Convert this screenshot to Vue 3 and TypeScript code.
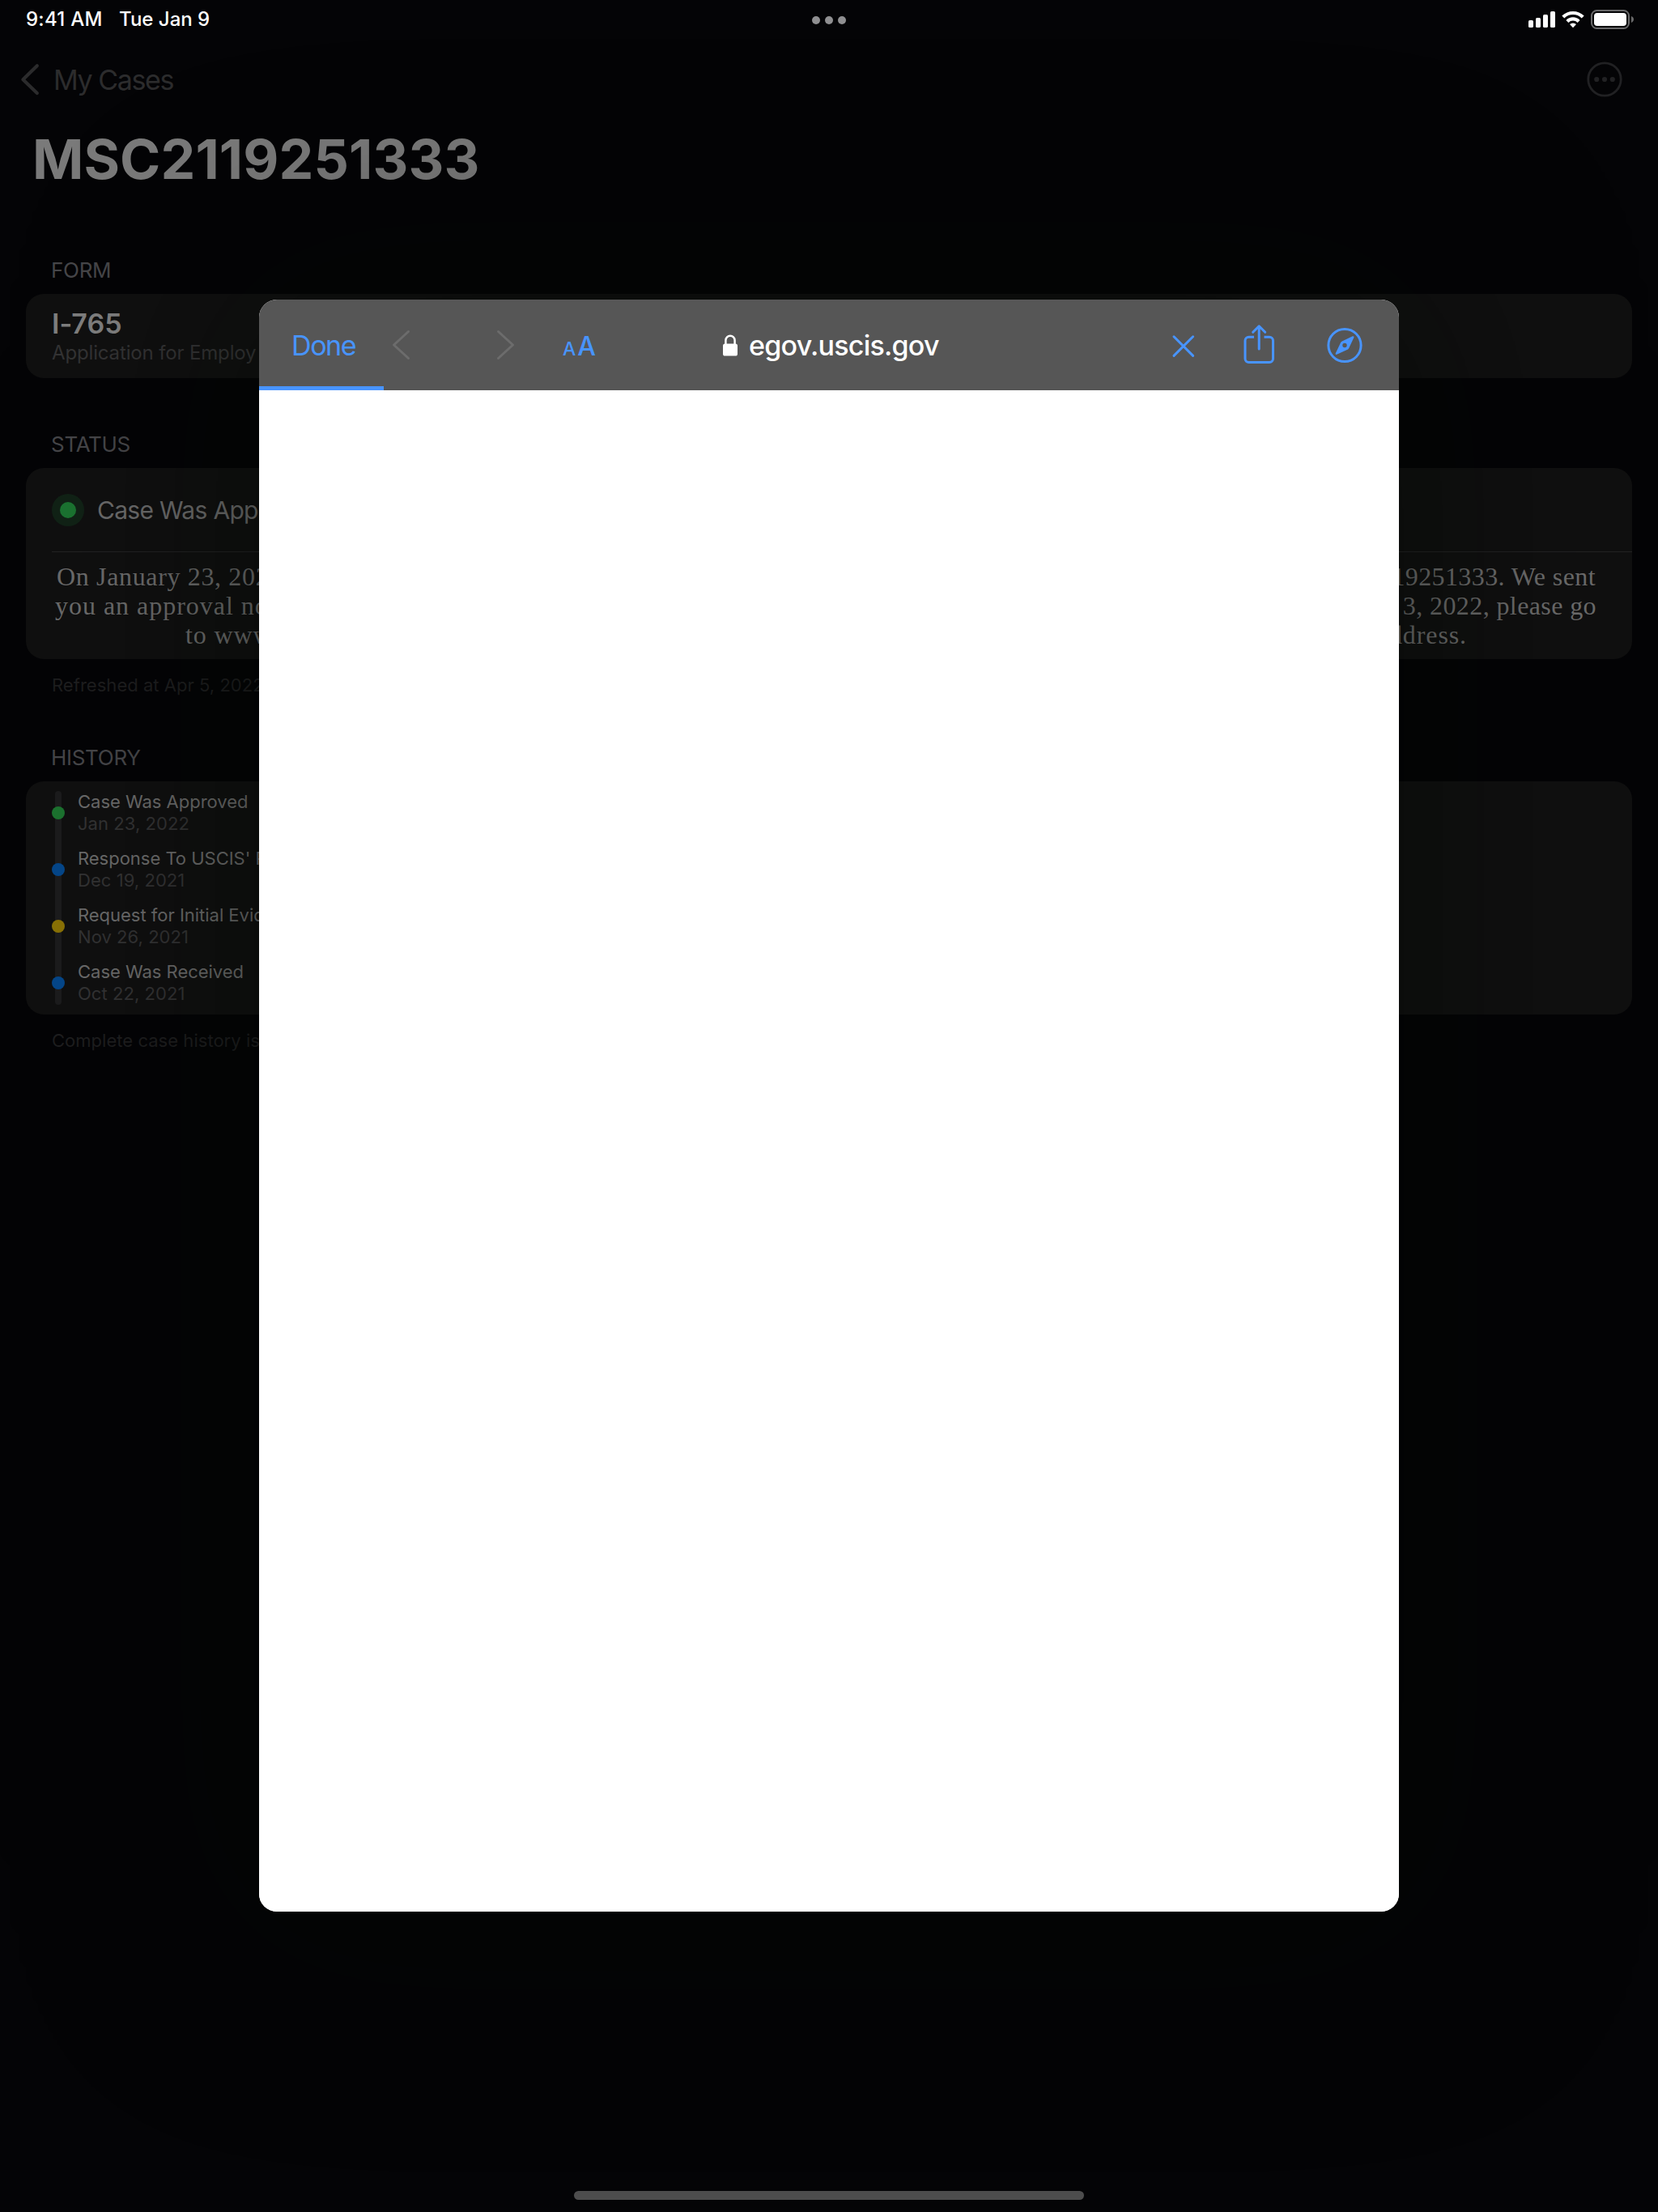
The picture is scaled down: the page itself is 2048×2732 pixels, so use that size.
<script setup lang="ts">
interface HistoryEvent {
  name: string
  date: string
  color: string
}

const caseNumber = 'MSC2119251333'

const events: HistoryEvent[] = [
  { name: 'Case Was Approved', date: 'Jan 23, 2022', color: '#1c732f' },
  { name: "Response To USCIS' R", date: 'Dec 19, 2021', color: '#05478a' },
  { name: 'Request for Initial Evid', date: 'Nov 26, 2021', color: '#8a7206' },
  { name: 'Case Was Received', date: 'Oct 22, 2021', color: '#05478a' },
]
</script>

<template>
  <div class="screen">
    <header class="status-bar">
      <span class="time">9:41 AM</span>
      <span class="day">Tue Jan 9</span>
      <svg class="multitask" width="42" height="10" viewBox="0 0 42 10" fill="#8f8f91">
        <circle cx="5" cy="5" r="5" /><circle cx="21" cy="5" r="5" /><circle cx="37" cy="5" r="5" />
      </svg>
      <svg class="indicators" width="134" height="28" viewBox="0 0 134 28" fill="#fff">
        <rect x="2" y="15" width="6" height="9" rx="1.6" />
        <rect x="11" y="12" width="6" height="12" rx="1.6" />
        <rect x="20" y="8" width="6" height="16" rx="1.6" />
        <rect x="29" y="4" width="6" height="20" rx="1.6" />
        <g fill="none" stroke="#fff" stroke-width="4.2">
          <path d="M44.8 11.1a17.2 17.2 0 0 1 24.4 0" />
          <path d="M49.9 16.4a10 10 0 0 1 14.2 0" />
        </g>
        <path d="M57 24.2l-4-4.1a5.7 5.7 0 0 1 8 0z" />
        <rect x="80" y="3" width="46" height="22" rx="6.5" fill="none" stroke="#69696a" stroke-width="2" />
        <rect x="83" y="6" width="40" height="16" rx="3.8" />
        <path d="M129 10c2 .8 3 2.2 3 4s-1 3.2-3 4z" fill="#69696a" />
      </svg>
    </header>

    <nav class="nav">
      <svg class="back" width="26" height="42" viewBox="0 0 26 42" fill="none" stroke="#2b2b2c" stroke-width="4.2" stroke-linecap="round" stroke-linejoin="round">
        <path d="M21.8 4.2L4.4 21.2L21.8 38" />
      </svg>
      <span class="back-label">My Cases</span>
      <svg class="more" width="44" height="44" viewBox="0 0 44 44" fill="#212123">
        <circle cx="22" cy="22" r="20.2" fill="none" stroke="#212123" stroke-width="2.8" />
        <circle cx="12.2" cy="22" r="3.1" /><circle cx="22" cy="22" r="3.1" /><circle cx="31.8" cy="22" r="3.1" />
      </svg>
    </nav>

    <h1 class="title">{{ caseNumber }}</h1>

    <section class="section form">
      <h2>FORM</h2>
      <div class="card form-card">
        <div class="form-name">I-765</div>
        <div class="form-desc">Application for Employ</div>
      </div>
    </section>

    <section class="section status">
      <h2>STATUS</h2>
      <div class="card">
        <div class="status-row">
          <span class="halo"><i /></span>
          <span class="status-name">Case Was Approved</span>
        </div>
        <div class="message">
          <div class="line first"><span>On January 23, 202</span><span>19251333. We sent</span></div>
          <div class="line second"><span>you an approval no</span><span>3, 2022, please go</span></div>
          <div class="line third"><span>to www</span><span>ddress.</span></div>
        </div>
      </div>
      <p class="note">Refreshed at Apr 5, 2022</p>
    </section>

    <section class="section history">
      <h2>HISTORY</h2>
      <div class="card history-card">
        <div class="track">
          <i v-for="event in events" :key="event.date" :style="{ background: event.color }" />
        </div>
        <ul>
          <li v-for="event in events" :key="event.date">
            <span>{{ event.name }}</span>
            <span class="date">{{ event.date }}</span>
          </li>
        </ul>
      </div>
      <p class="note">Complete case history is</p>
    </section>

    <div class="home-indicator" />

    <div class="shade" />
    <div class="browser">
      <div class="toolbar">
        <span class="done">Done</span>
        <svg class="prev" width="24" height="40" viewBox="0 0 24 40" fill="none" stroke="#6c6c6c" stroke-width="3" stroke-linecap="round" stroke-linejoin="round">
          <path d="M20.5 3.5L2.5 20L20.5 36.5" />
        </svg>
        <svg class="next" width="24" height="40" viewBox="0 0 24 40" fill="none" stroke="#6c6c6c" stroke-width="3" stroke-linecap="round" stroke-linejoin="round">
          <path d="M3.5 3.5L21.5 20L3.5 36.5" />
        </svg>
        <span class="text-size"><small>A</small>A</span>
        <svg class="lock" width="18" height="28" viewBox="0 0 18 28">
          <rect x="0" y="11.5" width="18" height="15" rx="2.6" fill="#fff" />
          <path d="M3.4 12.5V7.4a5.6 5.6 0 0 1 11.2 0V12.5" fill="none" stroke="#fff" stroke-width="2.5" />
        </svg>
        <span class="url">egov.uscis.gov</span>
        <div class="actions">
          <svg width="30" height="52" viewBox="0 0 30 52" fill="none" stroke="#4894ff" stroke-width="3" stroke-linecap="round">
            <path d="M3 15.800L26.600 39.400M26.600 15.800L3 39.400" />
          </svg>
          <svg class="share" width="40" height="52" viewBox="0 0 40 52" fill="none" stroke="#4894ff" stroke-width="3" stroke-linecap="round" stroke-linejoin="round">
            <path stroke-linecap="butt" d="M14 16.3H7.5a4.5 4.5 0 0 0-4.5 4.5V43a4.5 4.5 0 0 0 4.500 4.500H33a4.500 4.500 0 0 0 4.500-4.500V20.800a4.500 4.500 0 0 0-4.500-4.500H26.500" />
            <path d="M20.200 31V3.200M12.700 10.300L20.200 2.800L27.700 10.300" />
          </svg>
          <svg class="compass" width="44" height="52" viewBox="0 0 44 52">
            <circle cx="22" cy="26.500" r="20.100" fill="none" stroke="#4894ff" stroke-width="3" />
            <path fill="#4894ff" fill-rule="evenodd" d="M31.700 15.300C33 14.800 33.900 15.600 33.300 16.900L27.200 30.100Q26.800 31 26 31.500L12.300 37.800C11.100 38.300 10.300 37.400 10.800 36.200L17 23.200Q17.400 22.200 18.300 21.700ZM22 23.800a2.700 2.700 0 1 0 0 5.400a2.700 2.700 0 1 0 0-5.400Z" />
          </svg>
        </div>
        <div class="progress" />
      </div>
      <div class="page" />
    </div>
  </div>
</template>

<style>
body {
  margin: 0;
  background: #040406;
}
</style>

<style scoped>
.screen {
  position: relative;
  box-sizing: border-box;
  width: 2048px;
  height: 2732px;
  overflow: hidden;
  background: #040406;
  font-family: Inter, "Liberation Sans", sans-serif;
  white-space: nowrap;
  font-feature-settings: "calt" 0;
}
svg {
  display: block;
  flex: none;
}
h1,
h2,
p,
ul {
  margin: 0;
  padding: 0;
  list-style: none;
}

.status-bar {
  display: flex;
  height: 48px;
  padding-left: 32px;
  color: #fff;
  font-size: 24px;
  font-weight: 500;
  line-height: 48px;
}
.time {
  width: 115px;
  letter-spacing: 0.25px;
}
.day {
  width: 856px;
}
.multitask {
  margin-top: 20px;
}
.indicators {
  margin: 10px 0 0 841px;
}

.nav {
  display: flex;
  align-items: center;
  height: 100px;
  padding: 0 44px 0 24px;
  color: #2c2c2d;
}
.back-label {
  margin-left: 16px;
  font-size: 34px;
  letter-spacing: -1.4px;
}
.more {
  margin-left: auto;
}

.title {
  padding-left: 40px;
  color: #7a7a7a;
  font-size: 68px;
  font-weight: 700;
  line-height: 96px;
  letter-spacing: 0.1px;
}

.section {
  padding: 0 32px;
}
.form {
  margin-top: 59px;
}
.status {
  margin-top: 51px;
}
.history {
  margin-top: 39px;
}
h2 {
  box-sizing: border-box;
  padding: 1px 0 0 31px;
  height: 60px;
  line-height: 60px;
  color: #464649;
  font-size: 26px;
  font-weight: 400;
  letter-spacing: -0.3px;
}
.card {
  box-sizing: border-box;
  border-radius: 22px;
  background: #101010;
  overflow: hidden;
}

.form-card {
  height: 104px;
  padding: 17px 32px 0;
}
.form-name {
  color: #7f7f7f;
  font-size: 34px;
  font-weight: 600;
  line-height: 40px;
}
.form-desc {
  color: #333334;
  font-size: 24px;
  line-height: 32px;
  letter-spacing: -0.15px;
}

.status-row {
  box-sizing: border-box;
  display: flex;
  align-items: center;
  height: 104px;
  margin-left: 32px;
  border-bottom: 1px solid #222223;
}
.halo {
  display: flex;
  align-items: center;
  justify-content: center;
  width: 40px;
  height: 40px;
  border-radius: 50%;
  background: #112216;
}
.halo i {
  width: 20px;
  height: 20px;
  border-radius: 50%;
  background: #1b7431;
}
.status-name {
  margin-left: 16px;
  color: #6b6b6b;
  font-size: 30px;
  letter-spacing: -0.7px;
}
.message {
  padding: 12px 0;
  color: #6b6b6b;
  font: 32px/36px "Liberation Serif", serif;
}
.line {
  display: flex;
  justify-content: space-between;
}
.first {
  padding: 0 45px 0 38px;
  letter-spacing: 0.4px;
}
.first span:first-child {
  letter-spacing: 0.65px;
}
.second {
  padding: 0 44px 0 36px;
  letter-spacing: 0.4px;
}
.second span:first-child {
  letter-spacing: 0.98px;
}
.third {
  padding: 0 204px 0 197px;
  letter-spacing: 0.9px;
}
.note {
  margin-top: 12px;
  padding-left: 32px;
  height: 40px;
  line-height: 40px;
  color: #1e1e1f;
  font-size: 22px;
  letter-spacing: 0.03px;
}

.history-card {
  display: flex;
  height: 288px;
  padding: 12px 0 12px 36px;
}
.track {
  display: flex;
  flex-direction: column;
  align-items: center;
  gap: 54px;
  box-sizing: border-box;
  width: 8px;
  height: 264px;
  padding-top: 19px;
  border-radius: 4px;
  background: #1c1c1d;
}
.track i {
  flex: none;
  width: 16px;
  height: 16px;
  border-radius: 50%;
}
.history-card ul {
  display: flex;
  flex-direction: column;
  gap: 16px;
  margin-left: 20px;
}
.history-card li {
  display: flex;
  flex-direction: column;
  color: #6b6b6b;
  font-size: 22px;
  line-height: 27px;
  letter-spacing: -0.02px;
}
.history-card .date {
  color: #333334;
  letter-spacing: 0.05px;
}

.home-indicator {
  position: absolute;
  left: 709px;
  bottom: 15px;
  width: 630px;
  height: 11px;
  border-radius: 6px;
  background: #4d4d4d;
}

/* The sheet's soft, faintly green ambient shadow. */
.shade {
  position: absolute;
  left: 320px;
  top: 370px;
  width: 1408px;
  height: 1991px;
  border-radius: 22px;
  box-shadow: 0 0 320px 40px rgba(0, 7, 0, 0.42);
}
.browser {
  position: absolute;
  left: 320px;
  top: 370px;
  display: flex;
  flex-direction: column;
  width: 1408px;
  height: 1991px;
  border-radius: 22px;
  overflow: hidden;
  background: #fff;
}
.toolbar {
  position: relative;
  box-sizing: border-box;
  display: flex;
  align-items: center;
  flex: none;
  height: 112px;
  padding-left: 40px;
  background: #565656;
  color: #4894ff;
  font-size: 34px;
}
.done {
  width: 124px;
  letter-spacing: -1.4px;
}
.prev {
  width: 24px;
}
.next {
  margin-left: 104px;
}
.text-size {
  display: flex;
  align-items: baseline;
  gap: 2px;
  width: 198px;
  margin: 2px 0 0 59px;
  font-size: 32px;
  font-weight: 500;
}
.text-size small {
  font-size: 23px;
}
.lock {
  margin-top: 1px;
}
.url {
  margin-left: 14px;
  color: #fff;
  font-weight: 500;
  letter-spacing: -0.76px;
}
.actions {
  display: flex;
  margin: 0 45px 0 auto;
}
.share {
  margin-left: 58px;
}
.compass {
  margin-left: 64px;
}
.progress {
  position: absolute;
  left: 0;
  bottom: 0;
  width: 154px;
  height: 5px;
  background: #4894ff;
}
.page {
  flex: 1;
  background: #fff;
}
</style>
